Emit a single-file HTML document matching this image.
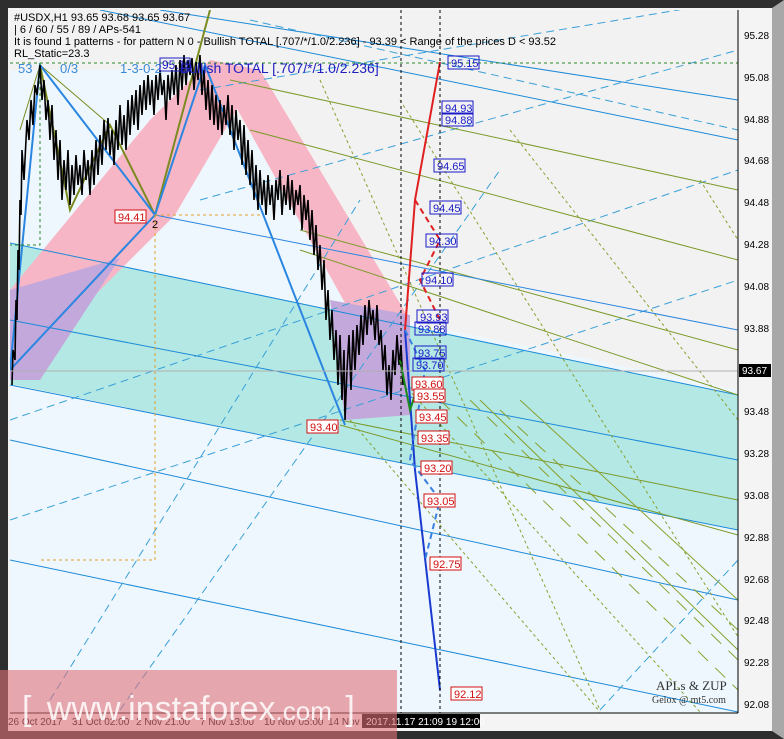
<!DOCTYPE html>
<html><head><meta charset="utf-8"><style>
html,body{margin:0;padding:0;width:784px;height:739px;overflow:hidden;background:#2e2e2e;font-family:"Liberation Sans",sans-serif}
svg{position:absolute;left:0;top:0}
</style></head><body>
<svg width="784" height="739" xmlns="http://www.w3.org/2000/svg" font-family="Liberation Sans, sans-serif">
<defs><clipPath id="c"><rect x="10" y="10" width="728" height="703"/></clipPath></defs>
<rect x="0" y="0" width="784" height="739" fill="#2e2e2e"/>
<polygon points="772,8 784,0 784,739 772,731" fill="#a8a8a8"/>
<rect x="8" y="8" width="764" height="723" fill="#f4f4f4"/>
<rect x="10" y="10" width="728" height="703" fill="#eef7fd"/>
<g clip-path="url(#c)">
<polygon points="10,10 738,10 738,390 400,320 200,70 10,70" fill="#f2f2f2"/>
<polygon points="10,243 738,395 738,530 10,384" fill="#b3e8e4"/>
<polygon points="10,290 150,120 210,60 260,70 175,215 10,380" fill="#f7b6c6"/>
<polygon points="210,60 260,70 410,320 360,330" fill="#f7b6c6"/>
<polygon points="10,290 120,258 40,380 10,380" fill="#c3a8dc"/>
<polygon points="330,300 410,315 410,415 345,420" fill="#c3a8dc"/>
<g stroke="#1c8ad8" stroke-width="1" fill="none">
<line x1="10" y1="320" x2="738" y2="460"/>
<line x1="10" y1="385" x2="738" y2="530"/>
<line x1="10" y1="243" x2="738" y2="395"/>
<line x1="100" y1="10" x2="738" y2="140"/>
<line x1="160" y1="10" x2="738" y2="100"/>
<line x1="10" y1="560" x2="738" y2="712"/>
<line x1="10" y1="440" x2="738" y2="600"/>
</g>
<g stroke="#3aa0d8" stroke-width="1" fill="none" stroke-dasharray="8,5">
<line x1="200" y1="90" x2="738" y2="0"/>
<line x1="200" y1="200" x2="738" y2="50"/>
<line x1="10" y1="420" x2="738" y2="170"/>
<line x1="10" y1="520" x2="738" y2="280"/>
<line x1="250" y1="20" x2="738" y2="130"/>
<line x1="50" y1="700" x2="360" y2="200"/>
<line x1="120" y1="710" x2="500" y2="170"/>
<line x1="600" y1="710" x2="738" y2="560"/>
</g>
<g stroke="#7c9a2a" stroke-width="1" fill="none">
<line x1="230" y1="80" x2="738" y2="190"/>
<line x1="250" y1="130" x2="738" y2="260"/>
<line x1="300" y1="230" x2="738" y2="350"/>
<line x1="300" y1="250" x2="738" y2="395"/>
<line x1="340" y1="420" x2="738" y2="500"/>
<line x1="340" y1="425" x2="738" y2="535"/>
</g>
<g stroke="#8aa030" stroke-width="1" fill="none" stroke-dasharray="3,3">
<line x1="320" y1="80" x2="600" y2="710"/>
<line x1="400" y1="100" x2="740" y2="640"/>
<line x1="510" y1="130" x2="738" y2="420"/>
<line x1="700" y1="180" x2="738" y2="240"/>
<line x1="350" y1="420" x2="600" y2="712"/>
<line x1="400" y1="380" x2="700" y2="712"/>
</g>
<g stroke="#8aa030" stroke-width="1" fill="none" stroke-dasharray="14,10">
<line x1="440" y1="400" x2="738" y2="690"/>
<line x1="470" y1="400" x2="738" y2="660"/>
<line x1="500" y1="410" x2="738" y2="630"/>
</g>
<g stroke="#8aa030" stroke-width="1" fill="none">
<line x1="480" y1="400" x2="738" y2="650"/>
<line x1="520" y1="400" x2="738" y2="600"/>
</g>
<polyline points="40,65 70,210 110,125 155,215 210,10" fill="none" stroke="#7c8a20" stroke-width="2"/>
<polyline points="20,130 40,65 110,125" fill="none" stroke="#7c8a20" stroke-width="1"/>
<polyline points="10,370 40,65 155,215 205,65 345,425" fill="none" stroke="#2a86e0" stroke-width="2"/>
<line x1="155" y1="215" x2="10" y2="370" stroke="#2a86e0" stroke-width="2"/>
<line x1="155" y1="215" x2="738" y2="330" stroke="#2a86e0" stroke-width="1"/>
<g stroke="#e0a030" stroke-dasharray="3,3" fill="none">
<polyline points="155,215 155,560 40,560"/><line x1="155" y1="215" x2="260" y2="215"/>
</g>
<g stroke="#2a8a2a" stroke-dasharray="3,3" fill="none">
<line x1="10" y1="63" x2="738" y2="63"/><polyline points="40,63 40,245 10,245"/>
</g>
<polyline fill="none" stroke="#000" stroke-width="1.6" points="12,385 13,350 15,360 16,300 17,320 18,250 19,270 20,200 21,215 22,150 24,180 25,160 27,120 29,140 31,100 33,125 35,85 37,95 40,65 42,100 44,80 46,120 48,100 50,140 52,105 54,160 56,130 58,180 60,140 62,200 64,160 66,190 68,150 70,205 72,165 74,195 76,155 78,185 80,165 82,195 84,150 86,180 88,160 90,195 92,150 94,185 96,140 98,175 100,135 102,165 104,120 106,150 108,118 110,155 112,130 114,165 116,120 118,150 120,105 122,145 124,115 126,150 128,100 130,135 132,95 134,125 136,90 138,130 140,85 142,115 144,80 146,110 148,75 150,105 152,80 154,115 156,75 158,100 160,70 162,95 164,80 166,120 168,75 170,100 172,70 174,95 176,65 178,105 180,60 182,90 184,55 186,85 188,60 190,75 192,58 194,90 196,62 198,80 200,55 202,95 204,70 206,110 208,80 210,120 212,85 214,125 216,95 218,130 220,100 222,135 224,105 226,125 228,95 230,135 232,105 234,150 236,110 238,140 240,120 242,165 244,125 246,175 248,140 250,185 252,150 254,200 256,165 258,210 260,170 262,205 264,180 266,215 268,175 270,205 272,185 274,220 276,180 278,200 280,170 282,215 284,185 286,205 288,175 290,210 292,180 294,215 296,190 298,205 300,185 302,230 304,195 306,220 308,200 310,240 312,210 314,255 316,225 318,270 320,245 322,290 324,260 326,320 328,290 330,340 332,310 334,360 336,330 338,385 340,335 342,400 344,350 345,420 347,370 349,335 351,390 353,330 355,370 357,325 359,355 361,315 363,345 365,305 367,335 369,300 371,325 373,310 375,340 377,305 379,345 381,330 383,370 385,345 387,395 389,365 391,400 393,350 395,375 397,335 399,365 401,345 403,385"/>
<polyline points="405,330 415,200 440,62" fill="none" stroke="#e02020" stroke-width="2"/>
<polyline points="415,200 440,240 420,280 440,320" fill="none" stroke="#e02020" stroke-width="2" stroke-dasharray="6,4"/>
<polyline points="405,330 415,470 440,690" fill="none" stroke="#1a3ad0" stroke-width="2"/>
<polyline points="405,330 425,370 410,460 440,500 425,560" fill="none" stroke="#3a80e0" stroke-width="2" stroke-dasharray="6,4"/>
<polyline points="400,360 410,410 420,380" fill="none" stroke="#1a8a1a" stroke-width="2"/>
<line x1="401" y1="10" x2="401" y2="713" stroke="#000" stroke-dasharray="3,3"/>
<line x1="440" y1="10" x2="440" y2="713" stroke="#000" stroke-dasharray="3,3"/>
<line x1="10" y1="371" x2="738" y2="371" stroke="#b0b0b0"/>
</g>
<g font-size="11" fill="#000">
<text x="14" y="21">#USDX,H1  93.65 93.68 93.65 93.67</text>
<text x="14" y="33">| 6 / 60 / 55 / 89 / APs-541</text>
<text x="14" y="45">It is found 1 patterns  -  for pattern N 0 - Bullish TOTAL [.707/*/1.0/2.236] - 93.39 &lt; Range of the prices D &lt; 93.52</text>
<text x="14" y="57">RL_Static=23.3</text>
</g>
<g font-size="13" fill="#3a8ad8"><text x="18" y="73">53</text><text x="60" y="73">0/3</text><text x="120" y="73">1-3-0-2</text></g>
<text x="180" y="73" font-size="14" fill="#2020c0">Bullish TOTAL [.707/*/1.0/2.236]</text>
<rect x="160" y="58" width="30" height="13" fill="none" stroke="#2020c0"/><text x="162" y="69" font-size="12" fill="#2020c0">95.15</text>
<g font-size="11" fill="#1a1ac8">
<g fill="none" stroke="#1a1ac8">
<rect x="448" y="56" width="31" height="13"/><rect x="442" y="101" width="31" height="13"/><rect x="442" y="113" width="31" height="13"/><rect x="434" y="159" width="31" height="13"/><rect x="430" y="201" width="31" height="13"/><rect x="426" y="234" width="31" height="13"/><rect x="422" y="273" width="31" height="13"/><rect x="417" y="310" width="31" height="13"/><rect x="415" y="322" width="31" height="13"/><rect x="415" y="346" width="31" height="13"/><rect x="413" y="358" width="31" height="13"/>
</g>
<text x="451" y="67">95.15</text><text x="445" y="112">94.93</text><text x="445" y="124">94.88</text><text x="437" y="170">94.65</text><text x="433" y="212">94.45</text><text x="429" y="245">94.30</text><text x="425" y="284">94.10</text><text x="420" y="321">93.93</text><text x="418" y="333">93.88</text><text x="418" y="357">93.75</text><text x="416" y="369">93.70</text>
</g>
<g font-size="11" fill="#d01010">
<g fill="#fff" stroke="#d01010">
<rect x="412" y="377" width="31" height="13"/><rect x="414" y="389" width="31" height="13"/><rect x="416" y="410" width="31" height="13"/><rect x="418" y="431" width="31" height="13"/><rect x="421" y="461" width="31" height="13"/><rect x="424" y="494" width="31" height="13"/><rect x="430" y="557" width="31" height="13"/><rect x="451" y="687" width="31" height="13"/><rect x="307" y="420" width="31" height="13"/><rect x="115" y="210" width="31" height="13"/>
</g>
<text x="415" y="388">93.60</text><text x="417" y="400">93.55</text><text x="419" y="421">93.45</text><text x="421" y="442">93.35</text><text x="424" y="472">93.20</text><text x="427" y="505">93.05</text><text x="433" y="568">92.75</text><text x="454" y="698">92.12</text><text x="310" y="431">93.40</text><text x="118" y="221">94.41</text>
</g>
<text x="152" y="228" font-size="11">2</text>
<text x="656" y="690" font-family="Liberation Serif,serif" font-size="13" fill="#333">APLs &amp; ZUP</text>
<text x="652" y="703" font-family="Liberation Serif,serif" font-size="10" fill="#333">Gelox @ mt5.com</text>
<line x1="738" y1="10" x2="738" y2="713" stroke="#000"/>
<g font-size="10" fill="#000">
<text x="744" y="39">95.28</text><text x="744" y="81">95.08</text><text x="744" y="123">94.88</text><text x="744" y="164">94.68</text><text x="744" y="206">94.48</text><text x="744" y="248">94.28</text><text x="744" y="290">94.08</text><text x="744" y="332">93.88</text><text x="744" y="415">93.48</text><text x="744" y="457">93.28</text><text x="744" y="499">93.08</text><text x="744" y="541">92.88</text><text x="744" y="583">92.68</text><text x="744" y="624">92.48</text><text x="744" y="666">92.28</text><text x="744" y="708">92.08</text>
</g>
<rect x="739" y="364" width="32" height="13" fill="#000"/><text x="742" y="374" font-size="10" fill="#fff">93.67</text>
<line x1="10" y1="713" x2="738" y2="713" stroke="#000"/>
<rect x="362" y="714" width="118" height="14" fill="#000"/>
<g font-size="10" fill="#000">
<text x="8" y="725">26 Oct 2017</text><text x="72" y="725">31 Oct 02:00</text><text x="136" y="725">2 Nov 21:00</text><text x="200" y="725">7 Nov 13:00</text><text x="264" y="725">10 Nov 05:00</text><text x="328" y="725">14 Nov</text>
</g>
<text x="366" y="725" font-size="10" fill="#fff">2017.11.17 21:09 19 12:00</text>
<rect x="0" y="670" width="397" height="69" fill="#e07078" opacity="0.6"/>
<text x="22" y="720" font-size="34" fill="#fff" opacity="0.85">[ <tspan dx="6">www.instaforex</tspan><tspan font-size="26">.com</tspan> <tspan dx="4">]</tspan></text>
</svg>
</body></html>
